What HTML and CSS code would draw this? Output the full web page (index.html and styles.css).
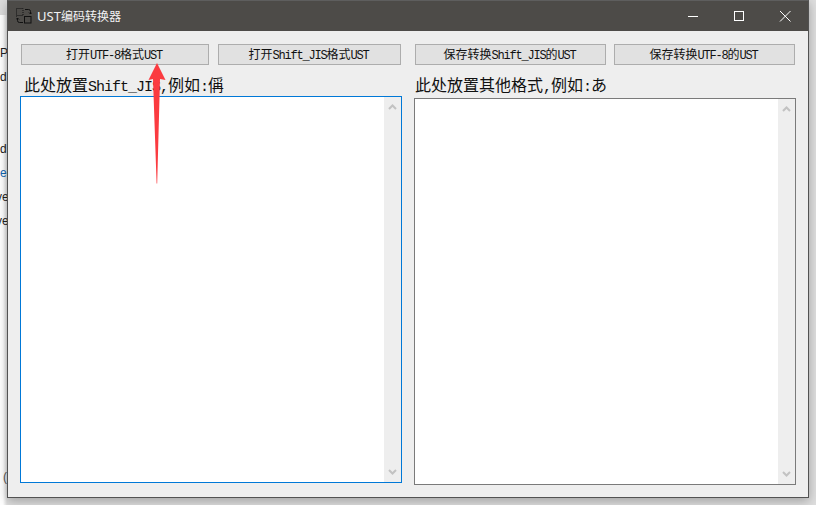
FILE: index.html
```html
<!DOCTYPE html>
<html lang="zh">
<head>
<meta charset="utf-8">
<title>UST编码转换器</title>
<link rel="stylesheet" href="styles.css">
</head>
<body>
<div class="desk">
  <div class="desk-top"></div>
  <span class="peek p1">P</span><span class="peek p2">d</span><span class="peek p3">d</span><span class="peek p4">e</span><span class="peek p5">ve</span><span class="peek p6">ve</span><span class="peek p7">(</span>
</div>
<main class="window">
  <header class="titlebar">
    <svg class="app-icon" width="16" height="16" viewBox="0 0 16 16" fill="none" stroke="#111" stroke-width="1">
      <path d="M.5 8.500V.5h6.500v7H.5" stroke-dasharray="1 1"/>
      <rect x="8.500" y="8.500" width="6.500" height="6.500"/>
      <path d="M9 1.500h3.500a2 2 0 0 1 2 2v2.500M13 4.500l1.500 1.500 1.500-1.500M7 14.500H3.500a2 2 0 0 1-2-2V10M0 11.500l1.500-1.500 1.500 1.500"/>
    </svg>
    <span class="title"><span class="title-lat">UST</span>编码转换器</span>
    <div class="controls">
      <svg class="ctl" width="46" height="31" viewBox="0 0 46 31" stroke="#fff" fill="none"><path d="M18 15.500h10"/></svg>
      <svg class="ctl" width="46" height="31" viewBox="0 0 46 31" stroke="#fff" fill="none"><rect x="18.500" y="10.500" width="9" height="9"/></svg>
      <svg class="ctl" width="46" height="31" viewBox="0 0 46 31" stroke="#fff" fill="none"><path d="M18 10l10.500 10.500M28.500 10L18 20.500"/></svg>
    </div>
  </header>
  <section class="content">
    <div class="buttons">
      <button class="btn b1">打开<span class="lat">UTF-8</span>格式<span class="lat">UST</span></button>
      <button class="btn b2">打开<span class="lat">Shift_JIS</span>格式<span class="lat">UST</span></button>
      <button class="btn b3">保存转换<span class="lat">Shift_JIS</span>的<span class="lat">UST</span></button>
      <button class="btn b4">保存转换<span class="lat">UTF-8</span>的<span class="lat">UST</span></button>
    </div>
    <div class="panes">
      <div class="pane left">
        <label class="lbl">此处放置<span class="lat16">Shift_JIS,</span>例如<span class="lat16">:</span>偁</label>
        <div class="box focus">
          <div class="text"></div>
          <div class="sb"><svg width="9" height="6" viewBox="0 0 9 6"><path d="M1 5l3.500-3.500L8 5" fill="none" stroke="#c2c2c2" stroke-width="2"/></svg><svg width="9" height="6" viewBox="0 0 9 6"><path d="M1 1l3.500 3.500L8 1" fill="none" stroke="#c2c2c2" stroke-width="2"/></svg></div>
        </div>
      </div>
      <div class="pane right">
        <label class="lbl">此处放置其他格式<span class="lat16">,</span>例如<span class="lat16">:</span>あ</label>
        <div class="box">
          <div class="text"></div>
          <div class="sb"><svg width="9" height="6" viewBox="0 0 9 6"><path d="M1 5l3.500-3.500L8 5" fill="none" stroke="#c2c2c2" stroke-width="2"/></svg><svg width="9" height="6" viewBox="0 0 9 6"><path d="M1 1l3.500 3.500L8 1" fill="none" stroke="#c2c2c2" stroke-width="2"/></svg></div>
        </div>
      </div>
    </div>
  </section>
</main>
<svg class="arrow" width="18" height="121" viewBox="0 0 18 121"><path d="M9 0L17.500 17 12 16 9.200 120.500H8.600L5 16 .5 17z" fill="#fb3b40"/></svg>
</body>
</html>
```
FILE: styles.css
```css
* { box-sizing: border-box; }
html, body { margin: 0; height: 100%; }
body { position: relative; width: 816px; height: 505px; overflow: hidden; background: #fff; font-family: "Noto Sans CJK SC", sans-serif; }
.desk { position: absolute; inset: 0; background: linear-gradient(90deg, #fff 0, #fff 3px, #dedede 7px); }
.desk-top { height: 15px; background: #dcdcdc; width: 8px; }
.peek { position: absolute; left: 0; font: 12px "Liberation Sans", sans-serif; color: #222; line-height: 14px; }
.p1 { top: 46px; }
.p2 { top: 70px; }
.p3 { top: 142px; }
.p4 { top: 166px; color: #1266b0; }
.p5 { top: 190px; left: -4px; }
.p6 { top: 214px; left: -4px; }
.p7 { top: 470px; left: 3px; color: #555; }
.window { position: absolute; left: 7px; top: 0; width: 802px; height: 498px; display: flex; flex-direction: column; background: #eeeeee; border: 1px solid #525252; border-top-color: #5e5e5e; box-shadow: 0 3px 10px rgba(0,0,0,.28); }
.titlebar { height: 30px; flex: none; display: flex; align-items: center; background: #4d4b48; padding-left: 8px; }
.app-icon { flex: none; margin-top: -1px; }
.title { margin-left: 5px; margin-top: -1px; font: 12px/16px "Noto Sans CJK SC", sans-serif; color: #f2f2f2; }
.title-lat { font: 13px/16px "Noto Sans", sans-serif; }
.controls { margin-left: auto; display: flex; }
.ctl { display: block; }
.content { flex: 1; display: flex; flex-direction: column; padding: 13px 12px 12px 12px; }
.buttons { display: flex; height: 21px; padding-left: 1px; }
.btn { height: 21px; padding: 0 2px 2px 0; background: #e1e1e1; border: 1px solid #adadad; color: #111; font: 12px/17px "Noto Sans CJK SC", sans-serif; white-space: nowrap; }
.b1 { width: 188px; margin-right: 9px; }
.b2 { width: 183px; margin-right: 14px; }
.b3 { width: 191px; margin-right: 8px; }
.b4 { width: 181px; }
.lat { font: 12px "Liberation Mono", monospace; letter-spacing: -1.2px; }
.lat16 { font: 15px "Liberation Mono", monospace; letter-spacing: -1px; }
.panes { flex: 1; display: flex; gap: 12px; }
.pane { width: 382px; display: flex; flex-direction: column; }
.lbl { display: block; font: 16px/20px "Noto Sans CJK SC", sans-serif; color: #111; white-space: nowrap; }
.left .lbl { margin-top: 9px; padding-left: 4px; height: 22px; }
.right .lbl { margin-top: 9px; padding-left: 1px; height: 24px; }
.box { width: 382px; height: 387px; display: flex; background: #fff; border: 1px solid #7a7a7a; }
.box.focus { border-color: #0078d7; }
.text { flex: 1; }
.sb { width: 17px; background: #eeeeee; display: flex; flex-direction: column; justify-content: space-between; align-items: center; padding: 7px 0; }
.sb svg { display: block; }
.arrow { position: absolute; left: 148px; top: 63px; }
```
